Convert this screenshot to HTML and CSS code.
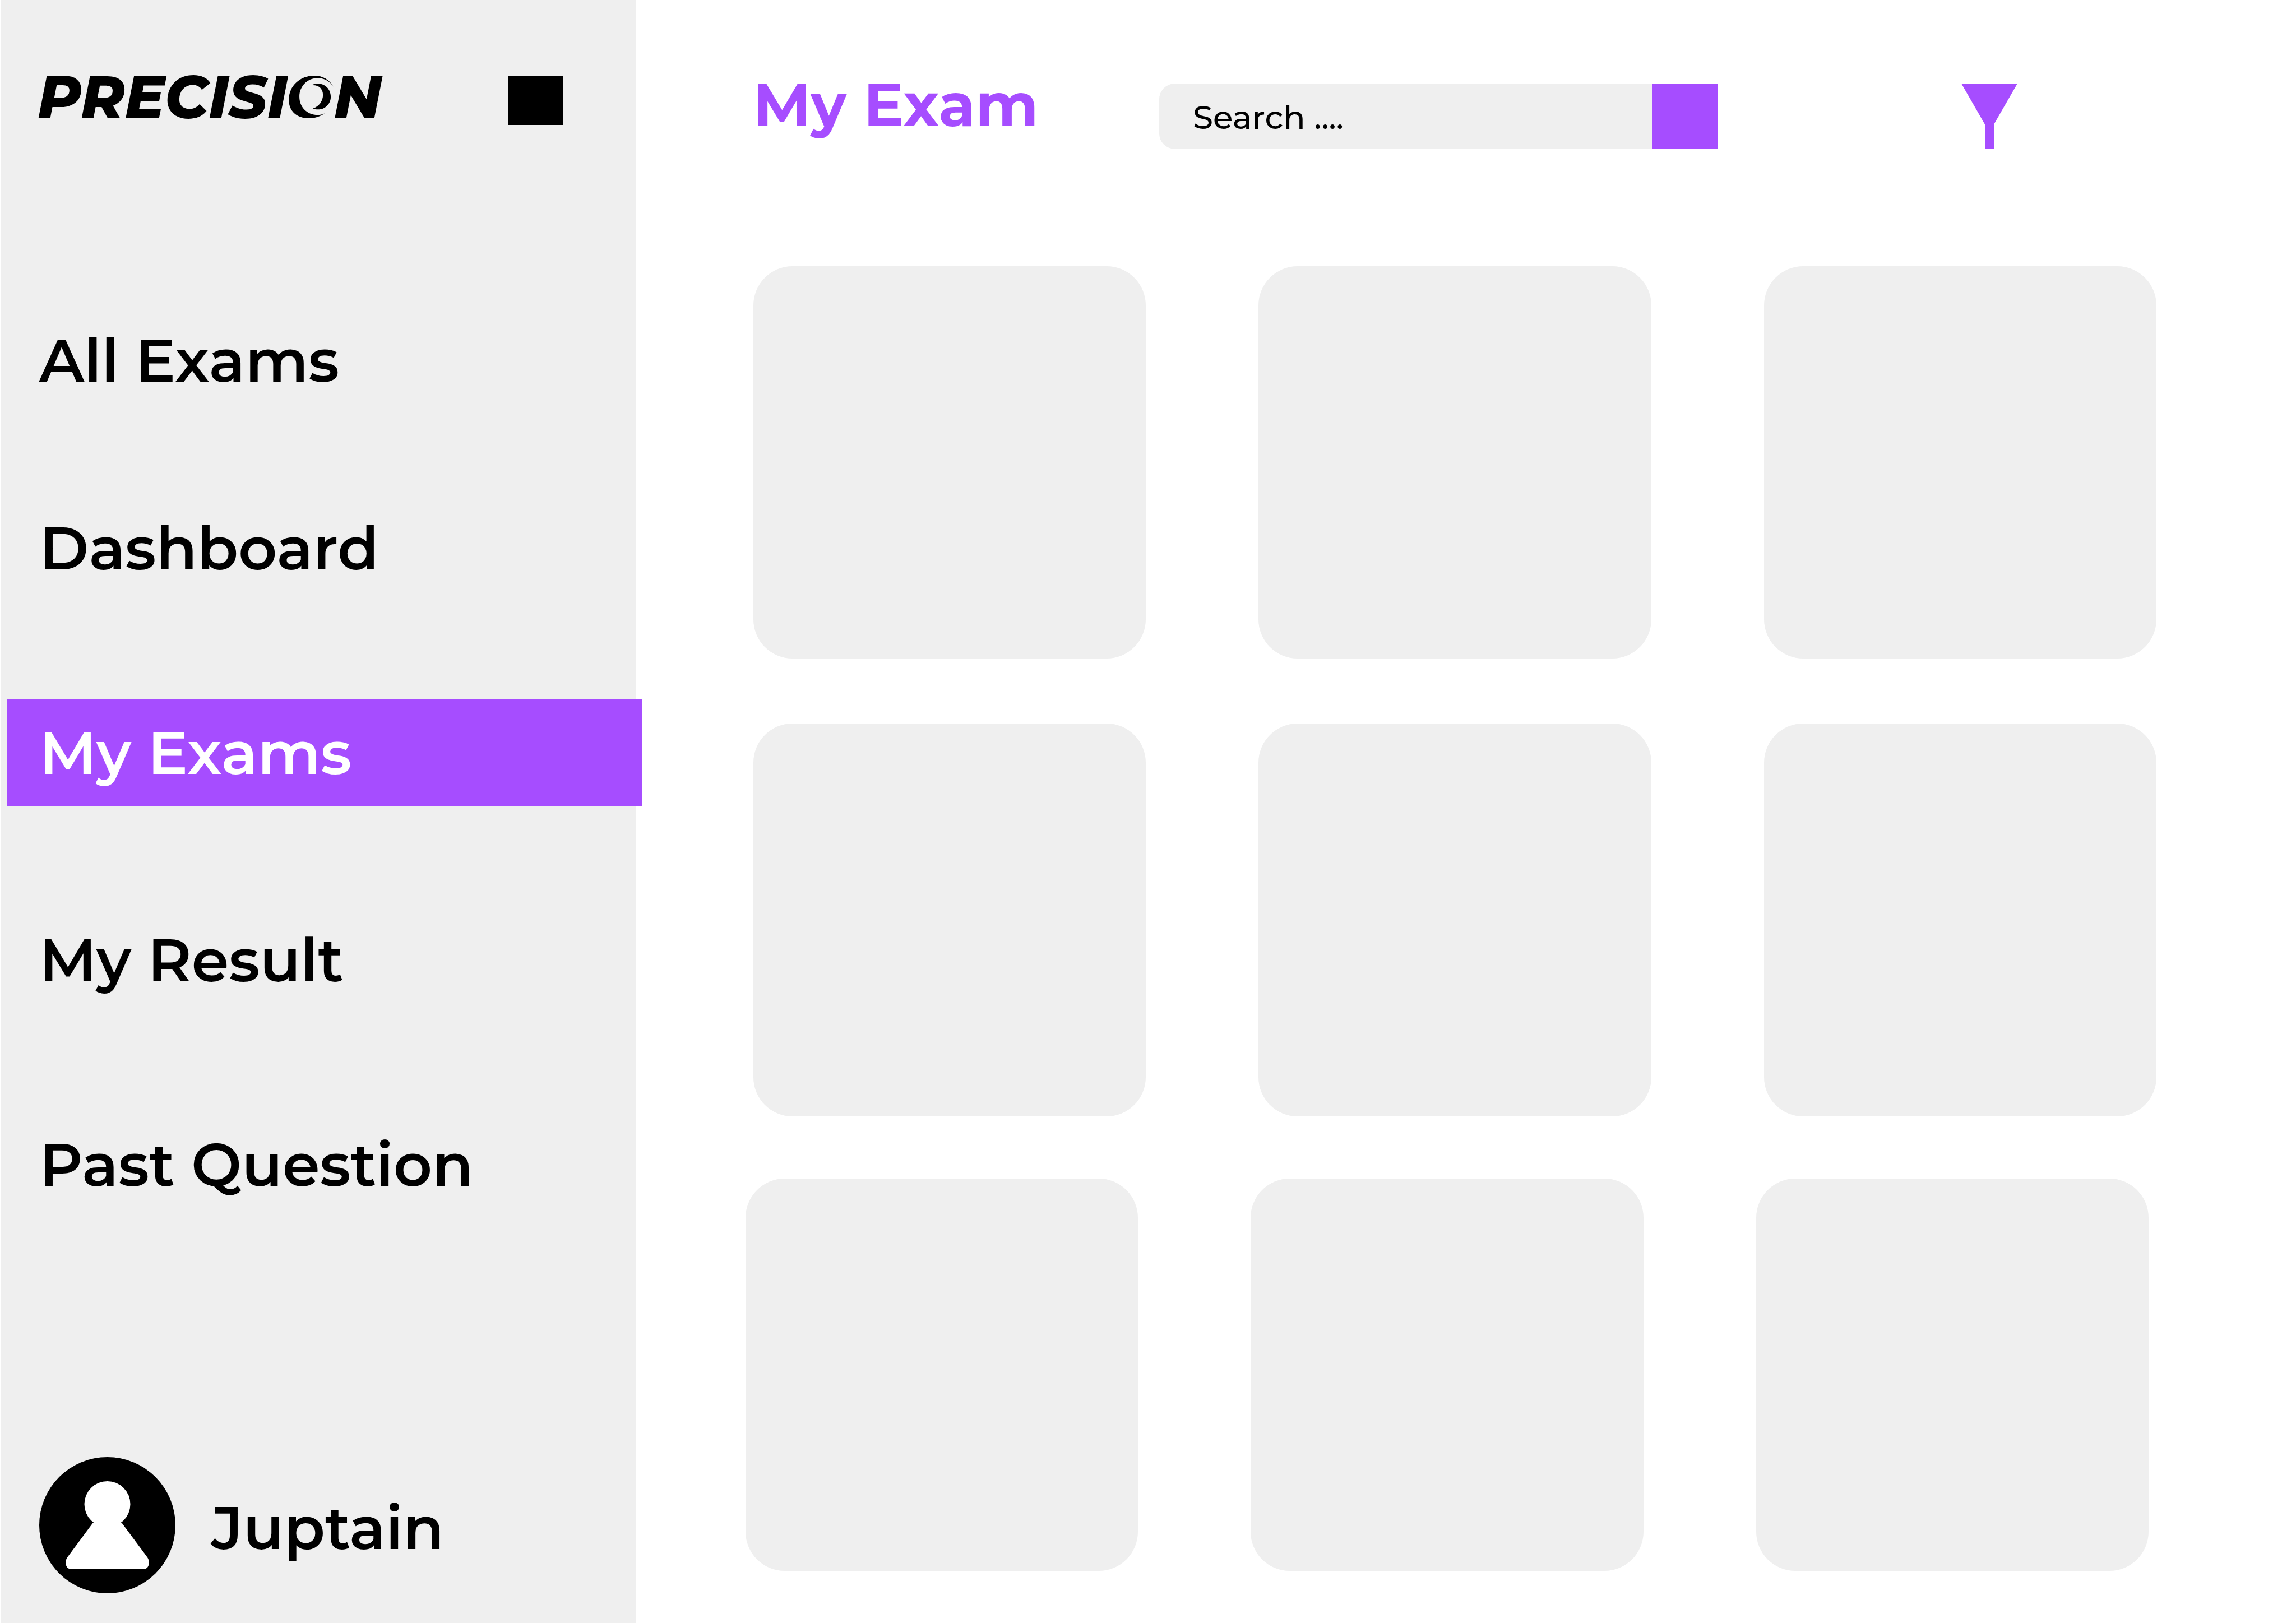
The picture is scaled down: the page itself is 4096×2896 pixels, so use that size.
FILE: index.html
```html
<!DOCTYPE html>
<html lang="en">
<head>
<meta charset="utf-8">
<title>My Exam</title>
<link rel="stylesheet" href="styles.css">
</head>
<body>
<div class="app">
  <aside class="sidebar">
    <div class="brand">
      <div class="logo">
        <span>PRECISI</span>
        <svg class="logo-o" viewBox="78 72 274 262" role="img" aria-label="O">
          <path d="M352 140C330 98 286 72 235 72C145 72 78 136 78 222C78 290 128 334 202 334C238 334 270 324 299 304C284 311 270 314 255 314C192 314 143 266 143 202C143 138 192 87 255 87C295 87 330 106 352 140Z"/>
          <path d="M217 131C228 124 242 121 257 121C302 121 336 156 336 201C336 246 302 280 257 280C246 280 235 278 226 274C264 261 288 228 288 190C288 152 260 126 217 131Z"/>
        </svg>
        <span>N</span>
      </div>
      <button class="menu-toggle" type="button" aria-label="Toggle menu"></button>
    </div>
    <nav class="nav">
      <a class="nav-item" href="#all">All Exams</a>
      <a class="nav-item" href="#dashboard">Dashboard</a>
      <a class="nav-item nav-item-active" href="#mine" aria-current="page">My Exams</a>
      <a class="nav-item" href="#result">My Result</a>
      <a class="nav-item" href="#past">Past Question</a>
    </nav>
    <div class="user">
      <svg class="avatar" viewBox="0 0 243 243" aria-hidden="true">
        <circle cx="121.5" cy="121.5" r="121.5"/>
        <circle cx="121.5" cy="84" r="41" fill="#fff"/>
        <path d="M96 117H147L193 179C199 188 195 200 186 200H57C48 200 44 188 50 179Z" fill="#fff"/>
      </svg>
      <span class="user-name">Juptain</span>
    </div>
  </aside>
  <main class="main">
    <header class="topbar">
      <h1 class="title">My Exam</h1>
      <form class="search">
        <input class="search-input" type="text" placeholder="Search ...." aria-label="Search">
        <button class="search-button" type="submit" aria-label="Search"></button>
      </form>
      <button class="filter" type="button" aria-label="Filter">
        <svg class="filter-icon" viewBox="0 0 100 117" aria-hidden="true"><path d="M0 0H100L58 73V117H42V73Z"/></svg>
      </button>
    </header>
    <section class="cards">
      <div class="card-row"><article class="card"></article><article class="card"></article><article class="card"></article></div>
      <div class="card-row"><article class="card"></article><article class="card"></article><article class="card"></article></div>
      <div class="card-row card-row-shifted"><article class="card"></article><article class="card"></article><article class="card"></article></div>
    </section>
  </main>
</div>
</body>
</html>
```
FILE: styles.css
```css
:root {
  --accent: #a64dff;
  --panel: #efefef;
}

* {
  box-sizing: border-box;
}

body {
  margin: 0;
  background: #fff;
  color: #000;
  font-family: Montserrat, Inter, sans-serif;
}

button {
  border: 0;
  padding: 0;
}

.app {
  display: grid;
  grid-template-columns: 1133px 1fr;
  min-height: 100vh;
  padding-left: 2px;
}

.sidebar {
  display: flex;
  flex-direction: column;
  padding: 135px 0 53px;
  background: var(--panel);
}

.brand {
  display: flex;
  align-items: flex-start;
  justify-content: space-between;
  padding: 0 131px 0 65px;
}

.logo {
  display: flex;
  align-items: center;
  height: 76px;
  font-size: 106px;
  font-style: italic;
  font-weight: 800;
  line-height: 76px;
}

.logo-o {
  width: 80px;
  height: 76px;
  margin-left: 3px;
}

.menu-toggle {
  width: 98px;
  height: 88px;
  background: #000;
}

.nav {
  display: flex;
  flex-direction: column;
  padding-top: 325px;
}

.nav-item {
  margin-bottom: 175px;
  padding: 0 68px;
  color: #000;
  font-size: 107px;
  font-weight: 600;
  line-height: 190px;
  text-decoration: none;
}

.nav-item:first-child {
  margin-bottom: 145px;
}

.nav-item-active {
  margin-right: -10px;
  margin-left: 10px;
  margin-bottom: 180px;
  padding: 0 58px;
  background: var(--accent);
  color: #fff;
}

.user {
  display: flex;
  align-items: center;
  gap: 64px;
  margin-top: auto;
  padding-left: 68px;
}

.avatar {
  width: 243px;
  height: 243px;
}

.user-name {
  padding-top: 8px;
  font-size: 107px;
  font-weight: 600;
}

.main {
  padding: 149px 249px 92px 209px;
}

.topbar {
  display: flex;
  align-items: flex-start;
  height: 117px;
}

.title {
  flex: none;
  width: 724px;
  margin: 0;
  color: var(--accent);
  font-size: 107px;
  font-weight: 700;
  line-height: 76px;
}

.search {
  display: flex;
  width: 997px;
  height: 117px;
}

.search-input {
  flex: 1;
  min-width: 0;
  padding: 4px 60px 0;
  border: 0;
  border-radius: 28px 0 0 28px;
  background: var(--panel);
  font-family: inherit;
  font-size: 58px;
  font-weight: 500;
}

.search-input::placeholder {
  color: #000;
  opacity: 1;
}

.search-button {
  width: 117px;
  background: var(--accent);
}

.filter {
  margin-right: 248px;
  margin-left: auto;
  background: none;
}

.filter-icon {
  display: block;
  width: 100px;
  height: 117px;
  fill: var(--accent);
}

.cards {
  padding-top: 209px;
}

.card-row {
  display: grid;
  grid-template-columns: repeat(3, 1fr);
  gap: 201px;
  margin-bottom: 116px;
}

.card-row-shifted {
  margin: -5px 14px 0 -14px;
}

.card {
  aspect-ratio: 1;
  border-radius: 70px;
  background: var(--panel);
}
```
